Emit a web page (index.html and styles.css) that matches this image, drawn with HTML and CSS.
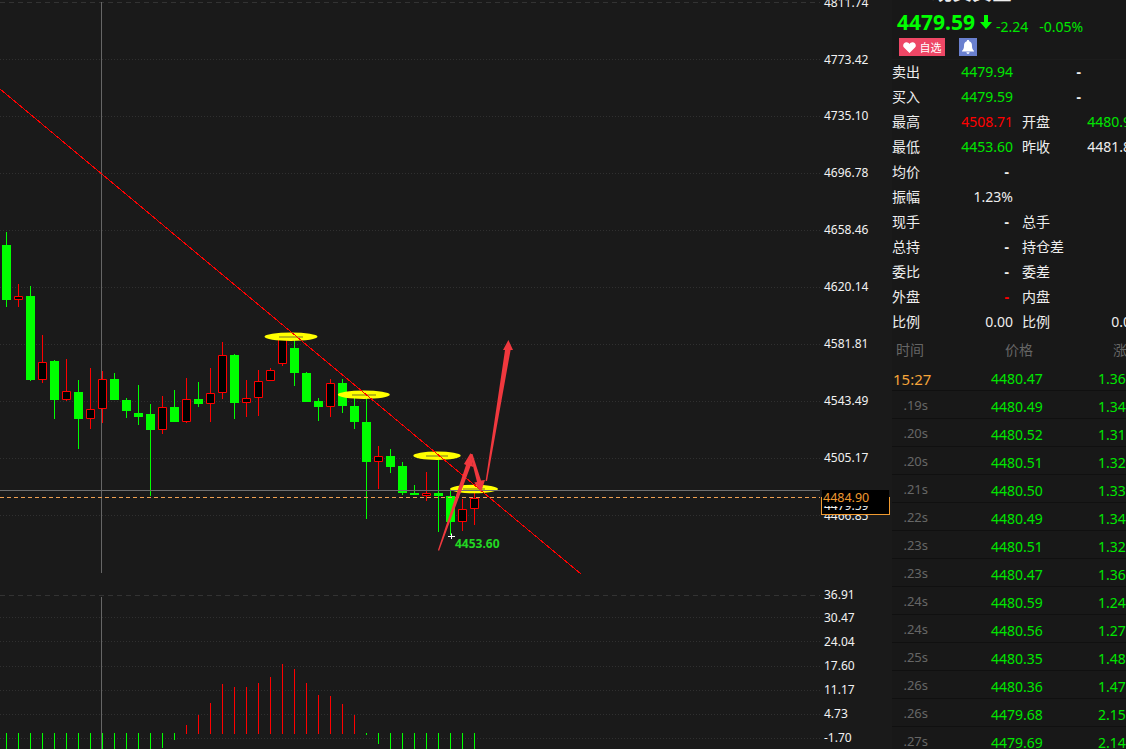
FILE: index.html
```html
<!DOCTYPE html>
<html lang="zh-CN">
<head>
<meta charset="utf-8">
<title>现货黄金</title>
<link rel="stylesheet" href="styles.css">
</head>
<body>
<div class="app">
  <main class="charts">
    <svg class="chart main-chart" width="892" height="590" viewBox="0 0 892 590">
      <path class="grid-dash" d="M0 2.5H820"/>
      <path class="grid" d="M0 59.5H820M0 116.5H820M0 173.5H820M0 230.5H820M0 287.5H820M0 344.5H820M0 401.5H820M0 458.5H820M0 515.5H820"/>
      <path class="cross" d="M101.5 2V573"/>
      <path class="wick-up" d="M18.5 284V307M42.5 335V383M66.5 359V401M90.5 368V429M102.5 371V423M162.5 396V434M186.5 378V423M210.5 368V422M222.5 342V399M246.5 380V417M258.5 370V416M270.5 368V381M282.5 334V366M330.5 379V417M378.5 446V489M426.5 472V501M462.5 499V531M474.5 492V525"/>
      <path class="body-up" d="M14.5 296.5h8v3h-8zM38.5 362.5h8v17h-8zM62.5 391.5h8v8h-8zM86.5 409.5h8v9h-8zM98.5 379.5h8v29h-8zM158.5 407.5h8v22h-8zM182.5 399.5h8v22h-8zM206.5 393.5h8v10h-8zM218.5 355.5h8v37h-8zM242.5 398.5h8v4h-8zM254.5 381.5h8v16h-8zM266.5 370.5h8v10h-8zM278.5 337.5h8v26h-8zM326.5 383.5h8v23h-8zM374.5 456.5h8v5h-8zM422.5 493.5h8v2h-8zM458.5 509.5h8v12h-8zM470.5 498.5h8v10h-8z"/>
      <path class="wick-down" d="M6.5 232V307M30.5 286V381M54.5 360V419M78.5 380V449M114.5 373V400M126.5 398V418M138.5 385V425M150.5 404V496M174.5 390V422M198.5 382V407M234.5 354V419M294.5 337V386M306.5 372V402M318.5 398V421M342.5 379V413M354.5 398V429M366.5 398V519M390.5 449V473M402.5 462V495M414.5 485V495M438.5 456V532M450.5 490V535"/>
      <path class="body-down" d="M2 245h9v55h-9zM26 296h9v84h-9zM50 361h9v39h-9zM74 392h9v27h-9zM110 379h9v21h-9zM122 400h9v11h-9zM134 413h9v4h-9zM146 414h9v16h-9zM170 407h9v15h-9zM194 399h9v5h-9zM230 355h9v48h-9zM290 348h9v25h-9zM302 373h9v29h-9zM314 401h9v6h-9zM338 383h9v23h-9zM350 406h9v16h-9zM362 422h9v40h-9zM386 456h9v11h-9zM398 466h9v27h-9zM410 493h9v2h-9zM434 493h9v3h-9zM446 496h9v26h-9z"/>
      <ellipse class="mark" cx="291" cy="336.7" rx="26.5" ry="4.2"/>
      <ellipse class="mark" cx="363.8" cy="394.7" rx="26" ry="4.2"/>
      <ellipse class="mark" cx="437" cy="455.7" rx="23.7" ry="4.2"/>
      <ellipse class="mark" cx="474" cy="489" rx="24" ry="4.2"/>
      <path class="mark-core" d="M279 337H303M352 395H376M426 456H448M463 489H485"/>
      <path class="trend" d="M0 89L581 574"/>
      <path class="level" d="M0 490.5H820"/>
      <path class="last-line" d="M0 497.5H820"/>
      <polygon class="arrow" points="438,550 466,465 464,464 470.6,453 473.2,467 470.6,466 439,551"/>
      <polygon class="arrow" points="470,454 472.5,454 481,480.6 485,480 481,492 474.2,482.6 477,482"/>
      <polygon class="arrow" points="485.6,481 505,350 503,350 508.4,340 513,350 510.6,350 487,481"/>
      <path class="low-mark" d="M448 536.5H455M451.5 533.5V539"/>
      <text class="low-text" x="455" y="548">4453.60</text>
      <g class="axis">
        <text x="824" y="7">4811.74</text>
        <text x="824" y="64">4773.42</text>
        <text x="824" y="120">4735.10</text>
        <text x="824" y="177">4696.78</text>
        <text x="824" y="234">4658.46</text>
        <text x="824" y="291">4620.14</text>
        <text x="824" y="348">4581.81</text>
        <text x="824" y="405">4543.49</text>
        <text x="824" y="462">4505.17</text>
        <text x="824" y="520">4466.85</text>
      </g>
      <rect class="tag-box" x="821.5" y="497.5" width="68" height="17"/>
      <text class="axis-text" x="824" y="510">4479.59</text>
      <rect class="tag-top" x="822" y="490" width="67" height="16"/>
      <text class="tag-text" x="823" y="502">4484.90</text>
    </svg>
    <svg class="chart sub-chart" width="892" height="159" viewBox="0 590 892 159">
      <path class="grid-dash" d="M0 595.5H820"/>
      <path class="grid" d="M0 617.5H820M0 641.5H820M0 666.5H820M0 690.5H820M0 714.5H820M0 738.5H820"/>
      <path class="cross" d="M101.5 597V749"/>
      <path class="wick-up" d="M186.5 725V734M198.5 715V734M210.5 703V734M222.5 684V734M234.5 687V734M246.5 687V734M258.5 683V734M270.5 677V734M282.5 664V734M294.5 669V734M306.5 683V734M318.5 695V734M330.5 696V734M342.5 704V734M354.5 715V734"/>
      <path class="wick-down" d="M6.5 733V749M18.5 733V749M30.5 733V749M42.5 733V749M54.5 733V749M66.5 733V749M78.5 733V749M90.5 733V749M102.5 733V749M114.5 733V749M126.5 733V749M138.5 733V749M150.5 733V749M162.5 733V748M174.5 733V740M366.5 733V735M378.5 733V744M390.5 733V749M402.5 733V749M414.5 733V749M426.5 733V749M438.5 733V749M450.5 733V749M462.5 733V749M474.5 733V749"/>
      <g class="axis">
        <text x="824" y="599">36.91</text>
        <text x="824" y="622">30.47</text>
        <text x="824" y="646">24.04</text>
        <text x="824" y="670">17.60</text>
        <text x="824" y="694">11.17</text>
        <text x="824" y="718">4.73</text>
        <text x="824" y="742">-1.70</text>
      </g>
    </svg>
  </main>
  <aside class="panel">
    <h1 class="title">现货黄金</h1>
    <div class="quote">
      <span class="price">4479.59</span>
      <svg class="down" width="12" height="14" viewBox="0 0 12 14"><path d="M4 0h4v7h4l-6 7-6-7h4z"/></svg>
      <span class="delta">-2.24</span>
      <span class="delta pct">-0.05%</span>
    </div>
    <div class="actions">
      <span class="fav">
        <svg width="13" height="11" viewBox="0 0 13 11"><path d="M6.5 11L1 5.6C-.6 3.8.2.6 3 .2 4.6 0 5.8.8 6.5 2 7.2.8 8.4 0 10 .2c2.8.4 3.6 3.6 2 5.4z"/></svg>
        自选
      </span>
      <span class="bell">
        <svg width="12" height="14" viewBox="0 0 12 14"><path d="M6 0c.8 0 1.2.5 1.2 1.2C9.4 1.8 10 3.6 10 6c0 2.4.6 3.6 2 4.8v.7H0v-.7C1.4 9.6 2 8.4 2 6c0-2.4.6-4.2 2.8-4.8C4.8.5 5.2 0 6 0zM4.4 12.3h3.2C7.400 13.300 6.800 14 6 14s-1.400-.7-1.600-1.700z"/></svg>
      </span>
    </div>
    <section class="info">
      <div class="row"><span>卖出</span><b class="up">4479.94</b><span class="dash">-</span><b></b></div>
      <div class="row"><span>买入</span><b class="up">4479.59</b><span class="dash">-</span><b></b></div>
      <div class="row"><span>最高</span><b class="hot">4508.71</b><span>开盘</span><b class="up">4480.96</b></div>
      <div class="row"><span>最低</span><b class="up">4453.60</b><span>昨收</span><b>4481.83</b></div>
      <div class="row"><span>均价</span><b class="nil">-</b></div>
      <div class="row"><span>振幅</span><b>1.23%</b></div>
      <div class="row"><span>现手</span><b class="nil">-</b><span>总手</span><b></b></div>
      <div class="row"><span>总持</span><b class="nil">-</b><span>持仓差</span><b></b></div>
      <div class="row"><span>委比</span><b class="nil">-</b><span>委差</span><b></b></div>
      <div class="row"><span>外盘</span><b class="nil hot">-</b><span>内盘</span><b></b></div>
      <div class="row"><span>比例</span><b>0.00</b><span>比例</span><b>0.00</b></div>
    </section>
    <section class="ticks">
      <div class="tick head"><span>时间</span><span>价格</span><span>涨跌</span></div>
      <div class="tick"><span class="now">15:27</span><b>4480.47</b><b>1.36</b></div>
      <div class="tick"><span>.19s</span><b>4480.49</b><b>1.34</b></div>
      <div class="tick"><span>.20s</span><b>4480.52</b><b>1.31</b></div>
      <div class="tick"><span>.20s</span><b>4480.51</b><b>1.32</b></div>
      <div class="tick"><span>.21s</span><b>4480.50</b><b>1.33</b></div>
      <div class="tick"><span>.22s</span><b>4480.49</b><b>1.34</b></div>
      <div class="tick"><span>.23s</span><b>4480.51</b><b>1.32</b></div>
      <div class="tick"><span>.23s</span><b>4480.47</b><b>1.36</b></div>
      <div class="tick"><span>.24s</span><b>4480.59</b><b>1.24</b></div>
      <div class="tick"><span>.24s</span><b>4480.56</b><b>1.27</b></div>
      <div class="tick"><span>.25s</span><b>4480.35</b><b>1.48</b></div>
      <div class="tick"><span>.26s</span><b>4480.36</b><b>1.47</b></div>
      <div class="tick"><span>.26s</span><b>4479.68</b><b>2.15</b></div>
      <div class="tick"><span>.27s</span><b>4479.69</b><b>2.14</b></div>
    </section>
  </aside>
</div>
</body>
</html>
```
FILE: styles.css
```css
html, body {
  margin: 0;
  height: 100%;
  overflow: hidden;
  background: #1a1a1a;
}

.app {
  display: flex;
  height: 749px;
  width: 1126px;
  overflow: hidden;
  font-family: "Noto Sans", "Noto Sans CJK SC", sans-serif;
}

.charts {
  flex: 0 0 892px;
  display: flex;
  flex-direction: column;
  background: #1a1a1a;
}

.chart { display: block; }

.grid { stroke: #303030; stroke-width: 1; stroke-dasharray: 1 2; fill: none; }
.grid-dash { stroke: #333; stroke-width: 1; stroke-dasharray: 5 4; fill: none; }
.cross { stroke: #666; stroke-width: 1; fill: none; }
.wick-up { stroke: #f00; stroke-width: 1; fill: none; }
.wick-down { stroke: #0f0; stroke-width: 1; fill: none; }
.body-up { fill: #000; stroke: #f00; stroke-width: 1; }
.body-down { fill: #0f0; }
.mark { fill: #ff0; }
.mark-core { stroke: #8c8c22; stroke-width: 2; opacity: .6; fill: none; }
.trend { stroke: #f00; stroke-width: 1; fill: none; shape-rendering: crispEdges; }
.level { stroke: #6e6e6e; stroke-width: 1; fill: none; }
.last-line { stroke: #f0a050; stroke-width: 1; stroke-dasharray: 4 3; fill: none; }
.arrow { fill: #f0383e; }
.low-mark { stroke: #fff; stroke-width: 1; fill: none; }
.low-text { font: 700 12px "Noto Sans", sans-serif; fill: #22d822; }
.axis text, .axis-text { font: 12px "Noto Sans", sans-serif; fill: #f2f2f2; }
.tag-box { fill: #000; stroke: #f09a30; stroke-width: 1; }
.tag-top { fill: #000; }
.tag-text { font: 12.5px "Noto Sans", sans-serif; fill: #f09a30; }

.panel {
  flex: 0 0 234px;
  width: 234px;
  overflow: hidden;
  background: #181818;
  color: #eee;
}

.title {
  margin: -18px 0 0 40px;
  font: 700 20px/20px "Noto Sans CJK SC", sans-serif;
  color: #eee;
  white-space: nowrap;
}

.quote {
  height: 32px;
  margin-top: 4px;
  display: flex;
  align-items: baseline;
  padding-left: 5px;
  box-sizing: border-box;
  padding-top: 1px;
  color: #00e600;
}

.price {
  font: 700 21px/30px "Noto Sans", sans-serif;
  color: #0f0;
}

.down {
  margin-left: 5px;
  fill: #0f0;
  align-self: flex-start;
  margin-top: 8px;
}

.delta {
  font: 14px/32px "Noto Sans", sans-serif;
  margin-left: 4px;
  transform: translateY(2px);
}

.delta.pct { margin-left: 11px; }

.actions {
  height: 22px;
  display: flex;
  align-items: flex-start;
  gap: 14px;
  padding-left: 7px;
}

.fav {
  width: 46px;
  height: 18px;
  display: flex;
  align-items: center;
  justify-content: center;
  gap: 4px;
  background: #ee4766;
  color: #fff;
  font: 11px/18px "Noto Sans CJK SC", sans-serif;
}

.fav svg { fill: #fff; }

.bell {
  width: 18px;
  height: 18px;
  display: flex;
  align-items: center;
  justify-content: center;
  background: #6a80cf;
}

.bell svg { fill: #fff; }

.info {
  width: 247px;
  border-top: 1px solid #1c1c1c;
  margin-top: -1px;
}

.row {
  display: grid;
  grid-template-columns: 40px 81px 68px 58px;
  height: 25px;
  font: 14px/23px "Noto Sans", "Noto Sans CJK SC", sans-serif;
  color: #eee;
}

.row b {
  font-weight: 400;
  text-align: right;
}

.row .nil {
  font-weight: 700;
  padding-right: 4px;
}

.row > span:nth-child(3) { margin-left: 9px; white-space: nowrap; }
.row > .dash { text-align: right; font-weight: 700; }
.up { color: #00e600; }
.hot { color: #f00; }

.tick {
  display: grid;
  grid-template-columns: 35px 170px 60px;
  height: 27px;
  padding-left: 1px;
  border-bottom: 1px solid #101010;
  font: 14px/32px "Noto Sans", sans-serif;
  color: #666;
}

.tick > span:first-child {
  text-align: right;
  font-size: 13px;
  line-height: 29px;
}

.tick b {
  font-weight: 400;
  color: #00e600;
}

.tick b:nth-child(2) { padding-left: 63px; }

.tick > span.now {
  color: #f5a53a;
  font-size: 15px;
  line-height: 32px;
}

.head {
  border-bottom: 0;
  height: 28px;
  font: 14px/28px "Noto Sans CJK SC", sans-serif;
}

.head > span:first-child {
  text-align: left;
  padding-left: 3px;
  font-size: 14px;
  line-height: 28px;
  white-space: nowrap;
}

.head > span:nth-child(2) { padding-left: 77px; }
.head > span:nth-child(3) { padding-left: 15px; white-space: nowrap; }
```
